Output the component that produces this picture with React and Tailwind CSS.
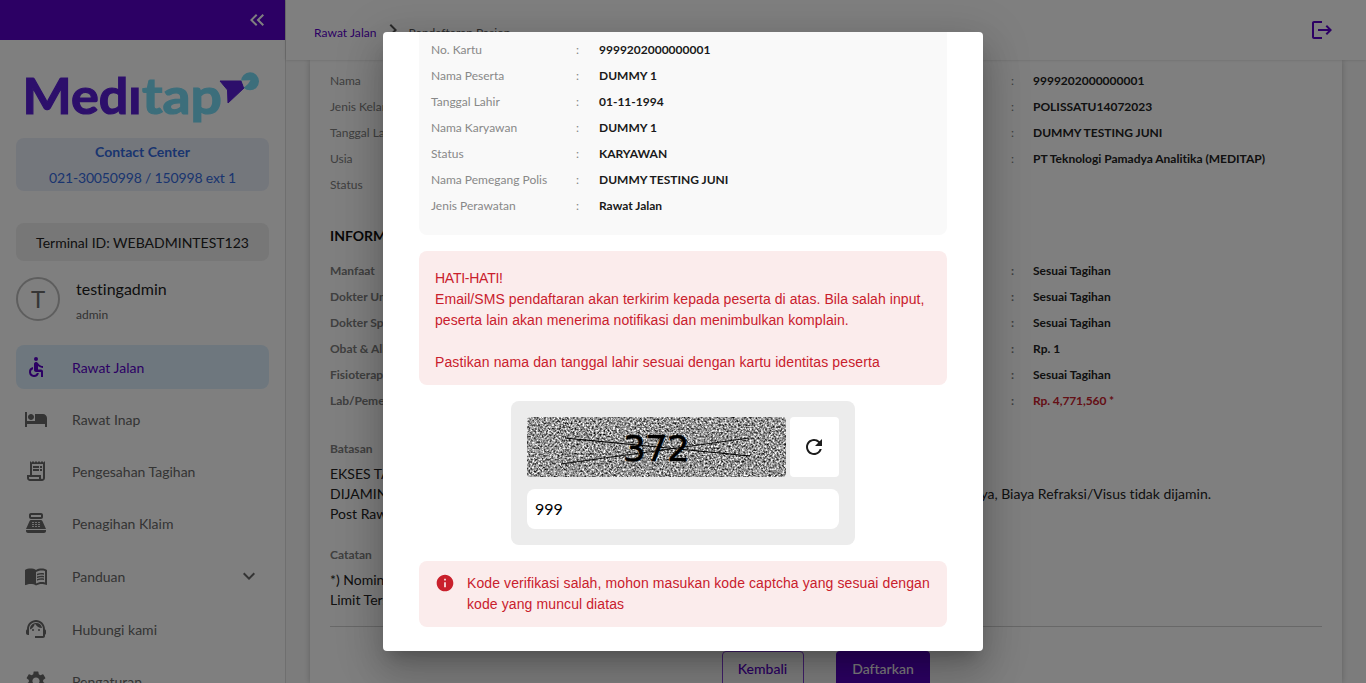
import React from "react";
import {
  MdAccessible,
  MdHotel,
  MdOutlineReceiptLong,
  MdPointOfSale,
  MdMenuBook,
  MdSupportAgent,
  MdSettings,
  MdInfo,
  MdRefresh,
  MdLogout,
  MdExpandMore,
  MdChevronRight,
  MdKeyboardDoubleArrowLeft,
} from "react-icons/md";

const nav = [
  { label: "Rawat Jalan", Icon: MdAccessible, active: true },
  { label: "Rawat Inap", Icon: MdHotel },
  { label: "Pengesahan Tagihan", Icon: MdOutlineReceiptLong },
  { label: "Penagihan Klaim", Icon: MdPointOfSale },
  { label: "Panduan", Icon: MdMenuBook, expandable: true },
  { label: "Hubungi kami", Icon: MdSupportAgent },
  { label: "Pengaturan", Icon: MdSettings },
];

const patient = ["Nama", "Jenis Kelamin", "Tanggal Lahir", "Usia", "Status"];
const policy = [
  "9999202000000001",
  "POLISSATU14072023",
  "DUMMY TESTING JUNI",
  "PT Teknologi Pamadya Analitika (MEDITAP)",
];
const benefits = [
  ["Manfaat", "Sesuai Tagihan"],
  ["Dokter Umum", "Sesuai Tagihan"],
  ["Dokter Spesialis", "Sesuai Tagihan"],
  ["Obat & Alkes", "Rp. 1"],
  ["Fisioterapi", "Sesuai Tagihan"],
  ["Lab/Pemeriksaan", "Rp. 4,771,560 *"],
];
const member = [
  ["No. Kartu", "9999202000000001"],
  ["Nama Peserta", "DUMMY 1"],
  ["Tanggal Lahir", "01-11-1994"],
  ["Nama Karyawan", "DUMMY 1"],
  ["Status", "KARYAWAN"],
  ["Nama Pemegang Polis", "DUMMY TESTING JUNI"],
  ["Jenis Perawatan", "Rawat Jalan"],
];

function Logo() {
  return (
    <svg width="240" height="72" viewBox="0 -8 240 72" className="ml-[23px] block">
      <text x="-0.500" y="46" fontSize="50" fontWeight="700" fill="#5a1fd6" stroke="#5a1fd6" strokeWidth="1.200" textLength="119" lengthAdjust="spacingAndGlyphs">
        Medı
      </text>
      <text x="119" y="46" fontSize="50" fontWeight="700" fill="#79dcf6" stroke="#79dcf6" strokeWidth="1.200" textLength="80" lengthAdjust="spacingAndGlyphs">
        tap
      </text>
      <circle cx="227" cy="13.300" r="9" fill="#79dcf6" />
      <path d="M197 13 H218 L221 20 L205 35 L204.500 22 Z" fill="#5a1fd6" stroke="#5a1fd6" strokeLinejoin="round" />
      <path d="M218.500 12.500 L227.500 12.300 Q226 16 221 19.500 Z" fill="#fff" />
    </svg>
  );
}

function Sidebar() {
  return (
    <aside className="flex h-full w-[286px] shrink-0 flex-col border-r border-[#dedede] bg-white">
      <div className="flex h-10 shrink-0 items-center justify-end bg-[#5800c8] pr-4 text-white">
        <MdKeyboardDoubleArrowLeft size={24} />
      </div>
      <div className="pt-5">
        <Logo />
      </div>
      <div className="flex flex-col px-4 pt-[6px]">
        <div className="flex h-[53px] flex-col items-center rounded-lg bg-[#e9eef9] text-[14px] leading-[26px] text-[#346bdf]">
          <span className="pt-px font-bold">Contact Center</span>
          <span className="tracking-[-0.16px]">021-30050998 / 150998 ext 1</span>
        </div>
        <div className="mt-8 flex h-[38px] items-center justify-center rounded-lg bg-[#eeeeee] text-[14px] text-[#222]">
          Terminal ID: WEBADMINTEST123
        </div>
        <div className="mt-4 flex h-11">
          <div className="flex size-11 items-center justify-center rounded-full border-2 border-[#bdbdbd] text-[24px] text-[#6c6c6c]">T</div>
          <div className="-mt-px ml-4 flex flex-col">
            <span className="text-[16px] leading-[26px] text-[#1c1c1c]">testingadmin</span>
            <span className="pt-px text-[12px] leading-[24px] text-[#666]">admin</span>
          </div>
        </div>
        <nav className="mt-6 flex flex-col gap-2">
          {nav.map(({ label, Icon, active, expandable }) => (
            <div
              key={label}
              className={
                "flex shrink-0 items-center rounded-lg pl-2 pr-2 text-[14px] " +
                (expandable ? "h-[46px] " : "h-11 ") +
                (active ? "bg-[#ddeffd] text-[#5800c8]" : "text-[#686868]")
              }
            >
              <Icon size={24} />
              <span className="ml-6 flex-1">{label}</span>
              {expandable && <MdExpandMore size={24} />}
            </div>
          ))}
        </nav>
      </div>
    </aside>
  );
}

function Header() {
  return (
    <header className="z-10 flex h-[60px] shrink-0 items-center justify-between bg-white pl-7 pr-8 shadow-[0_0_3px_rgba(0,0,0,0.18)]">
      <div className="flex items-center pt-[6px] text-[12px] leading-6">
        <span className="tracking-[0.06px] text-[#5800c8]">Rawat Jalan</span>
        <MdChevronRight size={24} className="mx-1 -mt-[6px] text-[#555]" />
        <span className="tracking-[0.04px] text-[#555]">Pendaftaran Pasien</span>
      </div>
      <MdLogout size={24} className="text-[#5800c8]" />
    </header>
  );
}

function Content() {
  return (
    <main className="flex min-h-0 flex-1 bg-[#f9f9f9] pl-6 pr-6">
      <section className="flex w-[1032px] flex-col bg-white px-5 pt-2 shadow-[0_0_6px_rgba(0,0,0,0.24)]">
        <div className="grid grid-cols-[681px_1fr] text-[12px] leading-[26px]">
          <div>
            {patient.map((p) => (
              <div key={p} className="h-[26px] text-[#808080]">{p}</div>
            ))}
          </div>
          <div>
            {policy.map((v) => (
              <div key={v} className="flex h-[26px]">
                <span className="w-[22px] text-[#808080]">:</span>
                <span className="font-bold text-[#222]">{v}</span>
              </div>
            ))}
          </div>
        </div>
        <h2 className="mt-7 h-5 text-[14px] font-bold leading-5 text-[#111]">INFORMASI MANFAAT</h2>
        <div className="mt-3 text-[12px] font-bold leading-[26px]">
          {benefits.map(([k, v]) => (
            <div key={k} className="flex h-[26px]">
              <span className="w-[681px] text-[#808080]">{k}</span>
              <span className="w-[22px] text-[#808080]">:</span>
              <span className={v.endsWith("*") ? "tracking-[-0.1px] text-[#c9202c]" : "text-[#222]"}>{v}</span>
            </div>
          ))}
        </div>
        <h3 className="mt-[22px] h-[26px] text-[12px] font-bold leading-[26px] text-[#808080]">Batasan</h3>
        <div className="mt-[2px] text-[14px] leading-5 text-[#222]">
          <p>EKSES TAGIHAN</p>
          <p className="flex w-[881px] justify-between">
            <span>DIJAMIN</span>
            <span>Biaya Kacamata dan Lensa lainnya, Biaya Refraksi/Visus tidak dijamin.</span>
          </p>
          <p>Post Rawat Inap</p>
        </div>
        <h3 className="mt-[18px] h-[26px] text-[12px] font-bold leading-[26px] text-[#808080]">Catatan</h3>
        <div className="mt-[2px] text-[14px] leading-5 text-[#222]">
          <p>*) Nominal</p>
          <p>Limit Tersedia</p>
        </div>
        <hr className="mt-4 border-[#d0d0d0]" />
        <div className="mt-6 flex justify-center gap-8 text-[14px] font-medium">
          <button className="flex h-9 w-[82px] justify-center rounded border border-[#8540d8] pr-px pt-[7px] leading-5 text-[#5800c8]">Kembali</button>
          <button className="flex h-9 w-[94px] justify-center rounded bg-[#5800c8] pt-2 leading-5 text-white">Daftarkan</button>
        </div>
      </section>
    </main>
  );
}

function Captcha() {
  return (
    <svg width="259" height="60" viewBox="0 0 259 60" className="block rounded">
      <filter id="grain" x="0" y="0" width="100%" height="100%" colorInterpolationFilters="sRGB">
        <feTurbulence type="fractalNoise" baseFrequency="0.52" numOctaves="2" seed="7" />
        <feColorMatrix type="matrix" values="1.7 0 0 0 -0.27  1.7 0 0 0 -0.27  1.7 0 0 0 -0.27  0 0 0 0 1" />
      </filter>
      <rect width="259" height="60" filter="url(#grain)" />
      <text x="96" y="44" fontSize="36" fill="#000" stroke="#000" strokeWidth="0.400" textLength="67" className="font-['DejaVu_Sans']">
        372
      </text>
      <path d="M38 21 L223 39" stroke="#000" strokeWidth="1.200" />
      <path d="M34 47 L222 21" stroke="#000" strokeWidth="0.900" />
    </svg>
  );
}

function Dialog() {
  return (
    <div className="flex h-[619px] w-[600px] flex-col overflow-hidden rounded bg-white px-9 shadow-[0_11px_15px_-7px_rgba(0,0,0,0.2),0_24px_38px_3px_rgba(0,0,0,0.14),0_9px_46px_8px_rgba(0,0,0,0.12)]">
      <div className="h-[203px] rounded-b-lg bg-[#f9f9f9] px-3 pt-[5px] text-[12px] leading-[26px]">
        {member.map(([k, v]) => (
          <div key={k} className="flex h-[26px]">
            <span className="w-[145px] text-[#888]">{k}</span>
            <span className="w-[23px] text-[#888]">:</span>
            <span className="font-bold text-[#1a1a1a]">{v}</span>
          </div>
        ))}
      </div>
      <div className="mt-4 h-[134px] rounded-lg bg-[#fbecec] px-4 pt-[17px] font-['Liberation_Sans',sans-serif] text-[14px] leading-[21px] text-[#c9202c]">
        <p className="tracking-[-0.25px]">HATI-HATI!</p>
        <p className="whitespace-nowrap tracking-[0.07px]">
          Email/SMS pendaftaran akan terkirim kepada peserta di atas. Bila salah input,
          <br />
          peserta lain akan menerima notifikasi dan menimbulkan komplain.
        </p>
        <p className="mt-[21px] tracking-[0.12px]">Pastikan nama dan tanggal lahir sesuai dengan kartu identitas peserta</p>
      </div>
      <div className="mt-4 flex h-36 w-[344px] flex-col gap-3 self-center rounded-lg bg-[#ececec] p-4">
        <div className="flex gap-1">
          <Captcha />
          <button className="flex h-[60px] w-[49px] items-center justify-center rounded bg-white pr-[2px] text-[#1c1c1c]">
            <MdRefresh size={24} />
          </button>
        </div>
        <div className="flex h-10 items-center rounded-lg bg-white px-2 text-[16px] text-black">999</div>
      </div>
      <div className="mt-4 flex h-[66px] rounded-lg bg-[#fbecec] px-4 pt-3 font-['Liberation_Sans',sans-serif] text-[14px] leading-[21px] text-[#c9202c]">
        <MdInfo size={20} className="mr-3 shrink-0" />
        <p className="whitespace-nowrap tracking-[0.1px]">
          Kode verifikasi salah, mohon masukan kode captcha yang sesuai dengan
          <br />
          kode yang muncul diatas
        </p>
      </div>
    </div>
  );
}

export default function App() {
  return (
    <div className="relative h-[683px] w-[1366px] overflow-hidden font-['Lato',sans-serif] [font-variant-ligatures:none]">
      <div className="flex h-full">
        <Sidebar />
        <div className="flex min-w-0 flex-1 flex-col">
          <Header />
          <Content />
        </div>
      </div>
      <div className="absolute inset-0 z-20 flex items-center justify-center bg-black/50">
        <Dialog />
      </div>
    </div>
  );
}
